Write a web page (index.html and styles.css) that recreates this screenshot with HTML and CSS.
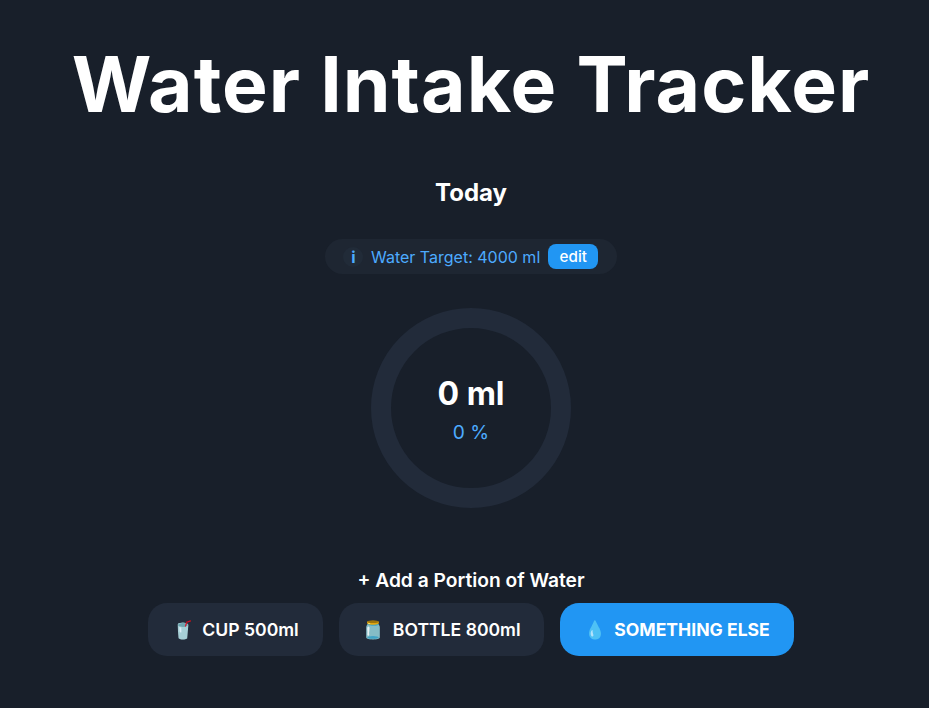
FILE: index.html
```html
<!DOCTYPE html>
<html lang="en">
<head>
<meta charset="utf-8">
<title>Water Intake Tracker</title>
<link rel="stylesheet" href="styles.css">
</head>
<body>
<main class="app">
  <h1>Water Intake Tracker</h1>
  <h2>Today</h2>
  <div class="target"><span class="info">i</span><span class="target-text">Water Target: 4000 ml</span><button class="edit">edit</button></div>
  <div class="ring"><div class="amount">0 ml</div><div class="percent">0 %</div></div>
  <h3>+ Add a Portion of Water</h3>
  <div class="portions">
    <button class="portion cup"><span class="icon">🥤</span>CUP 500ml</button>
    <button class="portion bottle"><span class="icon">🫙</span>BOTTLE 800ml</button>
    <button class="portion primary"><span class="icon">💧</span>SOMETHING ELSE</button>
  </div>
</main>
</body>
</html>
```

FILE: styles.css
```css
* { box-sizing: border-box; margin: 0; }
body { background: #181f2a; color: #fff; font-family: Inter, "Noto Sans", sans-serif; height: 708px; overflow: hidden; }
button { font-family: inherit; border: 0; color: #fff; padding: 0; }
.app { display: flex; flex-direction: column; align-items: center; padding: 37px 0 0 13px; }
h1 { font-size: 76.8px; line-height: 96px; font-weight: 700; letter-spacing: 1px; white-space: nowrap; }
h2 { font-size: 24px; line-height: 30px; margin-top: 45px; }
.target { display: flex; align-items: center; width: 292px; height: 35px; margin-top: 31px; padding-left: 18px; border-radius: 18px; background: #1e2632; color: #4dabff; font-size: 16px; }
.info { width: 20px; height: 20px; line-height: 20px; padding-left: 1px; border-radius: 50%; background: #212b38; text-align: center; font-weight: 700; }
.target-text { width: 169px; margin: 0 8px; white-space: nowrap; }
.edit { width: 50px; height: 25px; padding: 0 0 1px 0.5px; border-radius: 8px; background: #2196f3; font-size: 15.2px; font-weight: 500; }
.ring { display: flex; flex-direction: column; align-items: center; justify-content: center; width: 200px; height: 200px; margin-top: 34px; border: 20px solid #222b3a; border-radius: 50%; }
.amount { font-size: 32px; line-height: 40px; font-weight: 700; margin-top: 1px; }
.percent { font-size: 19.2px; line-height: 24px; color: #4dabff; margin-top: 6px; }
h3 { font-size: 19.2px; line-height: 24px; font-weight: 600; margin-top: 60px; }
.portions { display: flex; gap: 16px; margin-top: 11px; }
.portion { display: flex; align-items: center; justify-content: center; height: 53px; border-radius: 19px; background: #222b3a; font-size: 17.6px; font-weight: 600; white-space: nowrap; }
.cup { width: 175px; }
.bottle { width: 205px; }
.primary { width: 234px; background: #2196f3; font-weight: 700; }
.icon { margin-right: 8px; }
.bottle .icon { margin-right: 8.4px; }
```
